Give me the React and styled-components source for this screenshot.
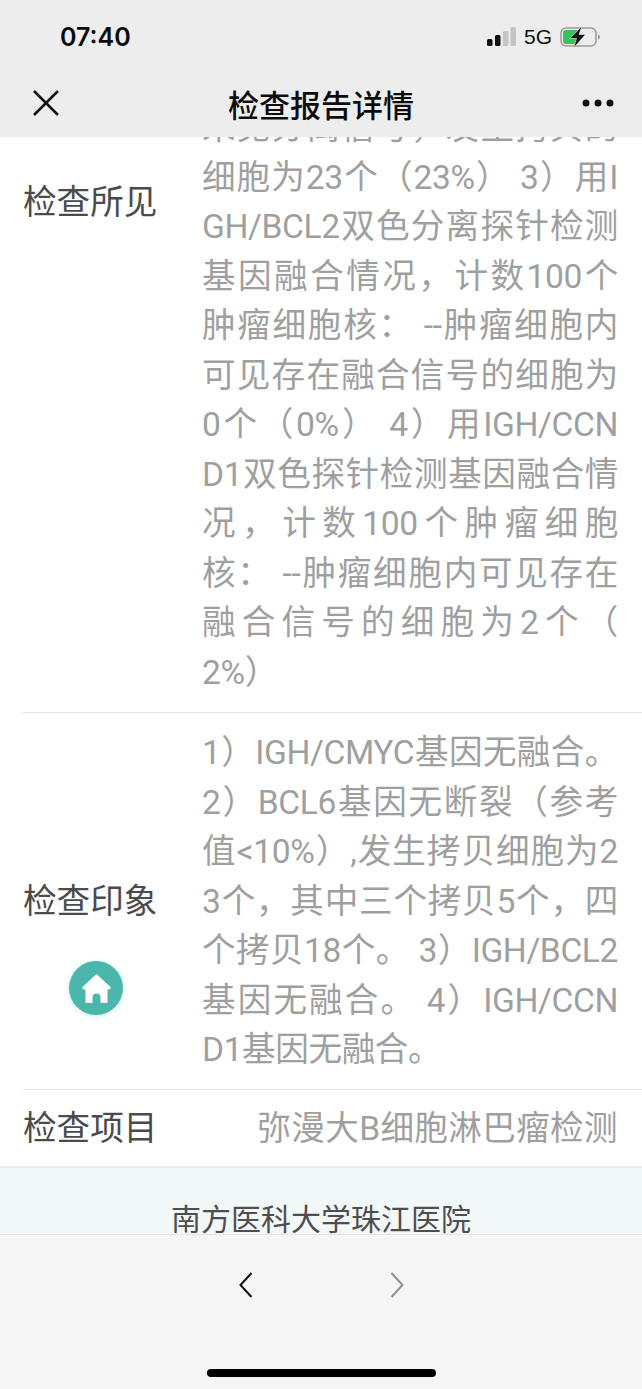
import React from "react"
import styled, { createGlobalStyle } from "styled-components"

const findings = [
  "未见分离信号，发生拷贝的",
  "细胞为23个（23%） 3）用I",
  "GH/BCL2双色分离探针检测",
  "基因融合情况，计数100个",
  "肿瘤细胞核： --肿瘤细胞内",
  "可见存在融合信号的细胞为",
  "0个（0%） 4）用IGH/CCN",
  "D1双色探针检测基因融合情",
  "况，计数100个肿瘤细胞",
  "核： --肿瘤细胞内可见存在",
  "融合信号的细胞为2个（",
  "2%）"
]

const impression = [
  "1）IGH/CMYC基因无融合。",
  "2）BCL6基因无断裂（参考",
  "值<10%）,发生拷贝细胞为2",
  "3个，其中三个拷贝5个，四",
  "个拷贝18个。 3）IGH/BCL2",
  "基因无融合。 4）IGH/CCN",
  "D1基因无融合。"
]

const GlobalStyle = createGlobalStyle`
  html, body {
    margin: 0;
    padding: 0;
    background: #fff;
  }
  * {
    box-sizing: border-box;
  }
`

const Page = styled.div`
  position: relative;
  width: 642px;
  height: 1389px;
  display: flex;
  flex-direction: column;
  overflow: hidden;
  font-family: "Roboto", "Noto Sans CJK SC", sans-serif;
  background: #fff;
`

const Top = styled.header`
  flex: none;
  height: 137px;
  background: #ededed;
  display: flex;
  flex-direction: column;
  z-index: 2;
`

const StatusBar = styled.div`
  height: 73px;
  padding: 0 42px 0 60px;
  display: flex;
  align-items: center;
  justify-content: space-between;
`

const Clock = styled.span`
  font-family: "Inter", sans-serif;
  font-size: 25px;
  font-weight: 600;
  color: #0b0b0b;
`

const StatusIcons = styled.div`
  display: flex;
  align-items: center;
  gap: 8px;
`

const Network = styled.span`
  font-family: "Liberation Sans", sans-serif;
  font-size: 21px;
  color: #111;
`

const NavBar = styled.div`
  flex: 1;
  padding: 0 28px 4px 32px;
  display: flex;
  align-items: center;
  justify-content: space-between;
`

const NavTitle = styled.h1`
  margin: 0;
  font-size: 31px;
  font-weight: 500;
  color: #0c0c0c;
`

const Content = styled.main`
  flex: 1;
  min-height: 0;
  overflow: hidden;
`

const Scroller = styled.div`
  margin-top: -34px;
`

const Row = styled.section`
  margin-left: 23px;
  padding: ${p => p.$top || 0}px 24px ${p => p.$bottom || 0}px 0;
  display: grid;
  grid-template-columns: 179px 1fr;
  align-items: center;
  border-bottom: ${p => (p.$last ? "none" : "1px solid #e4e4e4")};
`

const Label = styled.div`
  font-size: 33.6px;
  line-height: 49.5px;
  color: #4b4b4b;
  align-self: ${p => (p.$offset ? "start" : "center")};
  margin-top: ${p => p.$offset || 0}px;
`

const Value = styled.div`
  font-size: 33.6px;
  line-height: 49.5px;
  color: #9f9f9f;
  text-align: ${p => (p.$right ? "right" : "left")};
  letter-spacing: ${p => (p.$right ? "0.36px" : "normal")};
`

const Line = styled.div`
  text-align: justify;
  text-align-last: justify;
  letter-spacing: -0.4px;
  &:last-child {
    text-align-last: left;
  }
`

const Hospital = styled.div`
  height: 100px;
  padding-top: 30px;
  background: #f2f7f7;
  border-top: 2px solid #e8ecec;
  font-size: 30px;
  line-height: 44px;
  text-align: center;
  color: #4e4e4e;
`

const BottomBar = styled.footer`
  flex: none;
  height: 155px;
  background: #f6f6f6;
  border-top: 1px solid #e6e6e6;
  display: flex;
  flex-direction: column;
  align-items: center;
`

const Arrows = styled.div`
  margin-top: 37px;
  display: flex;
  gap: 137px;
`

const HomeIndicator = styled.div`
  margin-top: 71px;
  width: 229px;
  height: 8px;
  border-radius: 4px;
  background: #000;
`

const HomeButton = styled.div`
  position: absolute;
  left: 69px;
  top: 961px;
  width: 54px;
  height: 54px;
  border-radius: 50%;
  background: #4bb6ab;
  box-shadow: 0 1px 5px rgba(75, 182, 171, 0.3);
  display: flex;
  align-items: center;
  justify-content: center;
  z-index: 1;
`

const App = () => (
  <Page>
    <GlobalStyle />
    <Top>
      <StatusBar>
        <Clock>07:40</Clock>
        <StatusIcons>
          <svg width="29" height="19" viewBox="0 0 29 19">
            <rect x="0" y="12" width="5.500" height="7" rx="1.500" fill="#111" />
            <rect x="8" y="8" width="5.500" height="11" rx="1.500" fill="#111" />
            <rect x="16" y="4" width="5.500" height="15" rx="1.500" fill="#c4c4c4" />
            <rect x="23.500" y="0" width="5.500" height="19" rx="1.500" fill="#c4c4c4" />
          </svg>
          <Network>5G</Network>
          <svg width="40" height="22" viewBox="0 0 40 22">
            <rect x="1" y="2" width="35" height="18" rx="5" fill="none" stroke="#9a9a9a" strokeWidth="1.500" />
            <rect x="3" y="4" width="16" height="14" rx="3" fill="#3ac25a" />
            <path d="M38 8.500c1.200.4 2 1.400 2 2.500s-.8 2.100-2 2.500z" fill="#9a9a9a" />
            <path d="M22 0 10 12.500h6.500l-3 9.500L25.500 8.500H19z" fill="#111" stroke="#ededed" strokeWidth="0.600" />
          </svg>
        </StatusIcons>
      </StatusBar>
      <NavBar>
        <svg width="28" height="28" viewBox="0 0 28 28">
          <path d="M2 2l24 24M26 2 2 26" stroke="#111" strokeWidth="2.500" fill="none" />
        </svg>
        <NavTitle>检查报告详情</NavTitle>
        <svg width="32" height="8" viewBox="0 0 32 8">
          <circle cx="4" cy="4" r="3.500" fill="#111" />
          <circle cx="16" cy="4" r="3.500" fill="#111" />
          <circle cx="28" cy="4" r="3.500" fill="#111" />
        </svg>
      </NavBar>
    </Top>
    <Content>
      <Scroller>
        <Row $bottom={15}>
          <Label $offset={75}>检查所见</Label>
          <Value>
            {findings.map(line => (
              <Line key={line}>{line}</Line>
            ))}
          </Value>
        </Row>
        <Row $top={15} $bottom={14}>
          <Label>检查印象</Label>
          <Value>
            {impression.map(line => (
              <Line key={line}>{line}</Line>
            ))}
          </Value>
        </Row>
        <Row $last $top={14} $bottom={13}>
          <Label>检查项目</Label>
          <Value $right>弥漫大B细胞淋巴瘤检测</Value>
        </Row>
        <Hospital>南方医科大学珠江医院</Hospital>
      </Scroller>
    </Content>
    <HomeButton>
      <svg width="29" height="29" viewBox="0 0 29 29">
        <path d="M14.500 0 29 13.500l-1.500 2h-2V29h-7v-5.500a4 4 0 0 0-8 0V29h-7V15.500h-2l-1.500-2z" fill="#fff" />
      </svg>
    </HomeButton>
    <BottomBar>
      <Arrows>
        <svg width="14" height="26" viewBox="0 0 14 26">
          <path d="M12.500 1 1.500 13l11 12" stroke="#111" strokeWidth="2" fill="none" />
        </svg>
        <svg width="14" height="26" viewBox="0 0 14 26">
          <path d="M1.500 1l11 12-11 12" stroke="#8f8f8f" strokeWidth="2" fill="none" />
        </svg>
      </Arrows>
      <HomeIndicator />
    </BottomBar>
  </Page>
)

export default App
